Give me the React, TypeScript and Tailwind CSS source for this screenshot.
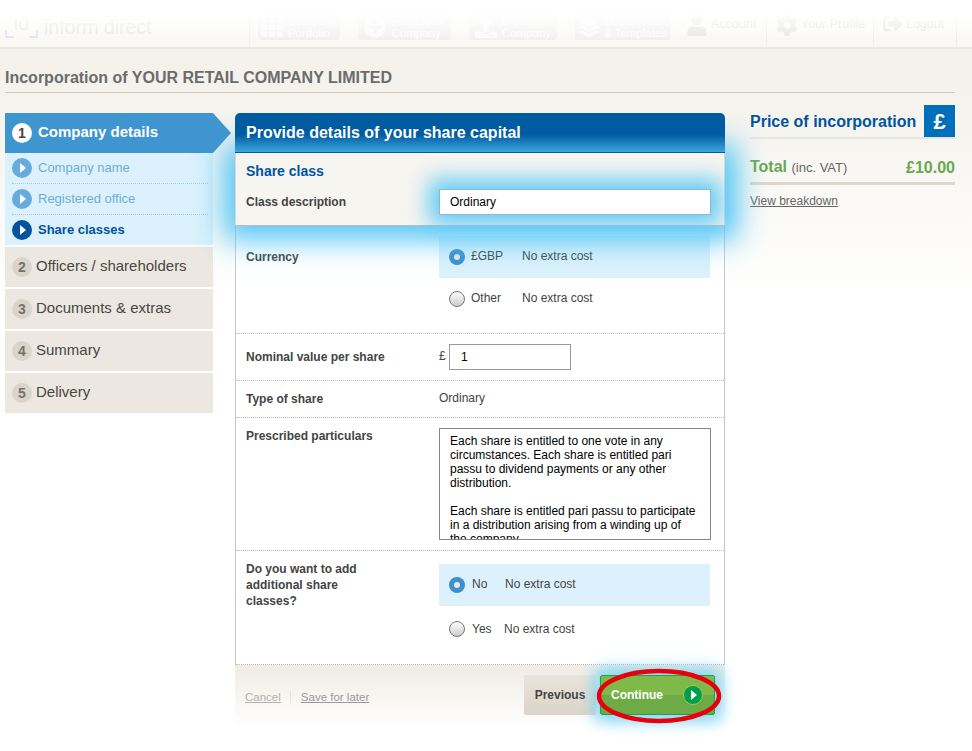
import { FaCog, FaLayerGroup, FaPlusCircle, FaSignOutAlt, FaTh, FaUpload, FaUser } from "react-icons/fa";

const prescribedText =
  "Each share is entitled to one vote in any circumstances. Each share is entitled pari passu to dividend payments or any other distribution.\n\nEach share is entitled pari passu to participate in a distribution arising from a winding up of the company.";

function PlayIcon({ className }: { className: string }) {
  return (
    <span className={`flex h-5 w-5 shrink-0 items-center justify-center rounded-full ${className}`}>
      <svg width="8" height="12" viewBox="0 0 8 12" className="ml-[2px]">
        <path d="M1 1l6 5-6 5z" fill="#fff" />
      </svg>
    </span>
  );
}

function Radio({ checked = false }: { checked?: boolean }) {
  if (checked) {
    return (
      <span className="flex h-4 w-4 shrink-0 items-center justify-center rounded-full bg-[#3e8fce]">
        <span className="h-[6px] w-[6px] rounded-full bg-[#e8e8e8]" />
      </span>
    );
  }
  return (
    <span className="h-4 w-4 shrink-0 rounded-full border border-[#777] bg-gradient-to-b from-[#fff] to-[#ccc]" />
  );
}

function StepRow({ num, label }: { num: number; label: string }) {
  return (
    <div className="mt-[2px] flex h-10 items-center gap-[4px] bg-[#ece8e1] pl-[7px]">
      <span className="flex h-5 w-5 items-center justify-center rounded-full bg-[#dad5cb] text-[14px] font-bold text-[#77726c]">
        {num}
      </span>
      <span className="pb-[2px] text-[15px] text-[#4a4642]">{label}</span>
    </div>
  );
}

function SubStep({ label, active = false }: { label: string; active?: boolean }) {
  return (
    <div className={`flex items-center gap-[6px] ${active ? "h-[30px]" : "h-[31px] border-b border-dotted border-[#9fd0ea]"}`}>
      <PlayIcon className={active ? "bg-[#00549f]" : "bg-[#66abdd]"} />
      <span className={`text-[13px] ${active ? "font-bold text-[#00549f]" : "text-[#6eaedd]"}`}>{label}</span>
    </div>
  );
}

function GhostButton({ width, top, label, icon }: { width: string; top: string; label: string; icon: React.ReactNode }) {
  return (
    <div className={`flex h-[26px] items-center justify-center gap-[5px] rounded-b-[4px] bg-gradient-to-b from-[#f7f7f6] to-[#f0f0ee] text-[11.5px] leading-[12px] text-white ${width}`}>
      <span className="text-white/70">{icon}</span>
      <span>
        {top}
        <br />
        {label}
      </span>
    </div>
  );
}

function GhostLink({ width, label, icon }: { width: string; label: string; icon: React.ReactNode }) {
  return (
    <div className={`flex h-[48px] items-start gap-[3px] border-r border-[#efeeea] pl-[9px] pt-[14px] text-[12.5px] text-[#e2e2e0] ${width}`}>
      <span className="text-[#e6e6e4]">{icon}</span>
      <span className="pt-[1px]">{label}</span>
    </div>
  );
}

export default function App() {
  return (
    <div className="relative h-[751px] w-[972px] overflow-hidden bg-gradient-to-b from-[#f5f2ec] from-[12%] to-white to-[40%] font-['Liberation_Sans',Arial,sans-serif]">
      {/* washed out site header */}
      <header className="relative flex h-[49px] border-b-2 border-[#ece9e4] bg-gradient-to-b from-white to-[#f8f7f3] pl-[5px]">
        <div className="flex w-[245px] items-start gap-[6px] border-r border-[#f1f0ec] pt-[11px]">
          <div className="relative h-[27px] w-[33px] text-center text-[20px] leading-[25px] text-[#e8e8e6]">
            id
            <span className="absolute bottom-0 left-0 h-[8px] w-[9px] border-b-2 border-l-2 border-[#dfe3f2]" />
            <span className="absolute bottom-0 right-0 h-[8px] w-[9px] border-b-2 border-r-2 border-[#cfeaf6]" />
          </div>
          <span className="pt-[1px] text-[20px] tracking-[-0.2px] text-[#e6e6e4]">inform direct</span>
        </div>
        <div className="flex items-start gap-[18px] pl-[8px] pt-[14px]">
          <GhostButton width="w-[82px]" top="Company" label="Portfolio" icon={<FaTh size={22} />} />
          <GhostButton width="w-[93px]" top="Form New" label="Company" icon={<FaPlusCircle size={22} />} />
          <GhostButton width="w-[88px]" top="Import" label="Company" icon={<FaUpload size={22} />} />
          <GhostButton width="w-[96px]" top="Documents" label="& Templates" icon={<FaLayerGroup size={20} />} />
        </div>
        <div className="ml-[6px] flex">
          <GhostLink width="w-[90px]" label="Account" icon={<FaUser size={22} />} />
          <GhostLink width="w-[107px]" label="Your Profile" icon={<FaCog size={22} />} />
          <GhostLink width="w-[83px]" label="Logout" icon={<FaSignOutAlt size={20} />} />
        </div>
        <div className="pointer-events-none absolute inset-0 bg-gradient-to-b from-white from-[25%] to-transparent to-[85%]" />
      </header>

      <div className="mx-[5px] w-[950px]">
        <h1 className="flex h-[44px] items-center border-b border-[#cfcbc4] pb-px pt-[15px] text-[16px] font-bold text-[#6b6b6b]">
          Incorporation of YOUR RETAIL COMPANY LIMITED
        </h1>

        <div className="mt-[20px] flex items-start">
          {/* step navigation */}
          <nav className="w-[208px] shrink-0">
            <div className="relative z-30 flex h-10 items-center gap-[6px] bg-[#3f95d0] pl-[7px]">
              <span className="flex h-5 w-5 items-center justify-center rounded-full bg-white text-[14px] font-bold text-[#444]">1</span>
              <span className="pb-[2px] text-[15px] font-bold text-white">Company details</span>
              <span className="absolute left-full top-0 h-0 w-0 border-y-[20px] border-l-[18px] border-y-transparent border-l-[#3f95d0]" />
            </div>
            <div className="bg-[#dcf1fb] px-[5px] pl-[7px]">
              <SubStep label="Company name" />
              <SubStep label="Registered office" />
              <SubStep label="Share classes" active />
            </div>
            <StepRow num={2} label="Officers / shareholders" />
            <StepRow num={3} label="Documents & extras" />
            <StepRow num={4} label="Summary" />
            <StepRow num={5} label="Delivery" />
          </nav>

          {/* form */}
          <main className="ml-[22px] w-[490px] shrink-0">
            <div className="relative z-20 flex h-10 items-center rounded-t-[5px] border-b border-[#0a5a96] bg-gradient-to-b from-[#005ba1] from-[55%] to-[#3aa7de] pl-[11px] text-[16px] font-bold text-white">
              Provide details of your share capital
            </div>

            <section className="relative z-10 h-[73px] border-x border-b border-[#d8d8d4] border-b-[#bbb] border-b-dotted bg-[#f7f5f0] pl-[10px] shadow-[0_2px_28px_12px_#55c6f5]">
              <h2 className="pt-[10px] text-[14px] font-bold leading-[17px] text-[#00549f]">Share class</h2>
              <div className="mt-[9px] flex items-center">
                <label className="w-[193px] text-[12px] font-bold text-[#444]">Class description</label>
                <input
                  readOnly
                  value="Ordinary"
                  className="h-[26px] w-[272px] border border-[#8fb8cf] bg-white pl-[10px] text-[12px] text-black shadow-[0_0_22px_10px_#62cbf5] outline-none"
                />
              </div>
            </section>

            <div className="border-x border-[#c8c8c8] bg-white">
              <div className="flex h-[108px] border-b border-dotted border-[#bbb] pl-[10px] pt-[10px]">
                <label className="w-[193px] pt-[14px] text-[12px] font-bold leading-[14px] text-[#444]">Currency</label>
                <div className="w-[271px]">
                  <div className="flex h-[42px] items-center bg-[#dcf1fb] pl-[10px] text-[12px] text-[#444]">
                    <Radio checked />
                    <span className="ml-[6px] w-[51px] pb-[2px]">£GBP</span>
                    <span className="pb-[2px]">No extra cost</span>
                  </div>
                  <div className="flex h-[41px] items-center pl-[10px] text-[12px] text-[#444]">
                    <Radio />
                    <span className="ml-[6px] w-[51px] pb-[2px]">Other</span>
                    <span className="pb-[2px]">No extra cost</span>
                  </div>
                </div>
              </div>

              <div className="flex h-[47px] items-center border-b border-dotted border-[#bbb] pl-[10px]">
                <label className="w-[193px] pb-[1px] text-[12px] font-bold text-[#444]">Nominal value per share</label>
                <span className="w-[10px] pb-[2px] text-[12px] text-[#444]">£</span>
                <input
                  readOnly
                  value="1"
                  className="h-[26px] w-[122px] border border-[#999] bg-white pl-[11px] text-[12px] text-black outline-none"
                />
              </div>

              <div className="flex h-[37px] items-center border-b border-dotted border-[#bbb] pl-[10px]">
                <label className="w-[193px] text-[12px] font-bold text-[#444]">Type of share</label>
                <span className="pb-[2px] text-[12px] text-[#444]">Ordinary</span>
              </div>

              <div className="flex h-[133px] border-b border-dotted border-[#bbb] pl-[10px] pt-[10px]">
                <label className="w-[193px] text-[12px] font-bold leading-[16px] text-[#444]">Prescribed particulars</label>
                <textarea
                  readOnly
                  value={prescribedText}
                  className="h-[112px] w-[272px] resize-none overflow-hidden border border-[#888] bg-white px-[10px] pt-[5px] text-[12px] leading-[14px] text-black outline-none"
                />
              </div>

              <div className="flex h-[114px] border-b border-dotted border-[#bbb] pl-[10px] pt-[13px]">
                <label className="-mt-[3px] w-[193px] pr-[60px] text-[12px] font-bold leading-[16px] text-[#444]">
                  Do you want to add additional share classes?
                </label>
                <div className="w-[271px]">
                  <div className="flex h-[42px] items-center bg-[#dcf1fb] pl-[10px] text-[12px] text-[#444]">
                    <Radio checked />
                    <span className="ml-[7px] w-[33px] pb-[2px]">No</span>
                    <span className="pb-[2px]">No extra cost</span>
                  </div>
                  <div className="mt-[2px] flex h-[42px] items-center pl-[10px] text-[12px] text-[#444]">
                    <Radio />
                    <span className="ml-[7px] w-[32px]">Yes</span>
                    <span>No extra cost</span>
                  </div>
                </div>
              </div>
            </div>

            <footer className="flex h-[62px] items-start justify-between bg-gradient-to-b from-[#f0ece4] to-white pl-[10px] pr-[10px] pt-[10px]">
              <div className="flex items-center pt-[14px] text-[11.5px]">
                <a className="text-[#b0b0ac] underline">Cancel</a>
                <span className="mx-[9px] h-[13px] w-px bg-[#e4e1da]" />
                <a className="ml-px text-[#999] underline">Save for later</a>
              </div>
              <div className="flex gap-[4px]">
                <button className="h-10 w-[72px] rounded-[2px] bg-gradient-to-b from-[#e9e4db] to-[#dbd4c8] text-[12px] font-bold text-[#444]">
                  Previous
                </button>
                <button className="flex h-10 w-[115px] items-center justify-between rounded-[2px] border border-[#1fa34a] bg-[linear-gradient(#7fb94a_50%,#6dab46_50%)] pl-[10px] pr-[11px] text-[12px] font-bold text-white shadow-[0_0_16px_6px_#7ad3f5]">
                  Continue
                  <PlayIcon className="border border-[#9fc850] bg-[#009f4d]" />
                </button>
              </div>
            </footer>
          </main>

          {/* price summary */}
          <aside className="-mt-[8px] ml-[25px] w-[205px] shrink-0">
            <div className="flex h-[34px] items-end justify-between border-b-2 border-[#e8e6e2]">
              <h2 className="pb-[3px] text-[16px] font-bold text-[#00549f]">Price of incorporation</h2>
              <span className="flex h-[32px] w-[31px] items-center justify-center bg-[#006fba] text-[22px] font-bold text-white">£</span>
            </div>
            <div className="mt-[19px] flex items-center justify-between border-b-[3px] border-[#ddd6ca] pb-[5px] leading-[18px]">
              <span className="text-[16px] font-bold text-[#6aa84f]">
                Total <span className="text-[13px] font-normal text-[#666]">(inc. VAT)</span>
              </span>
              <span className="text-[16px] font-bold text-[#6aa84f]">£10.00</span>
            </div>
            <a className="mt-[7px] block text-[12px] text-[#666] underline">View breakdown</a>
          </aside>
        </div>
      </div>

      {/* hand drawn annotation over the continue button */}
      <svg width="128" height="58" viewBox="0 0 128 58" className="absolute left-[595px] top-[667px] z-40">
        <ellipse cx="64" cy="29" rx="60" ry="25" fill="none" stroke="#e8000d" strokeWidth="4.5" />
      </svg>
    </div>
  );
}
